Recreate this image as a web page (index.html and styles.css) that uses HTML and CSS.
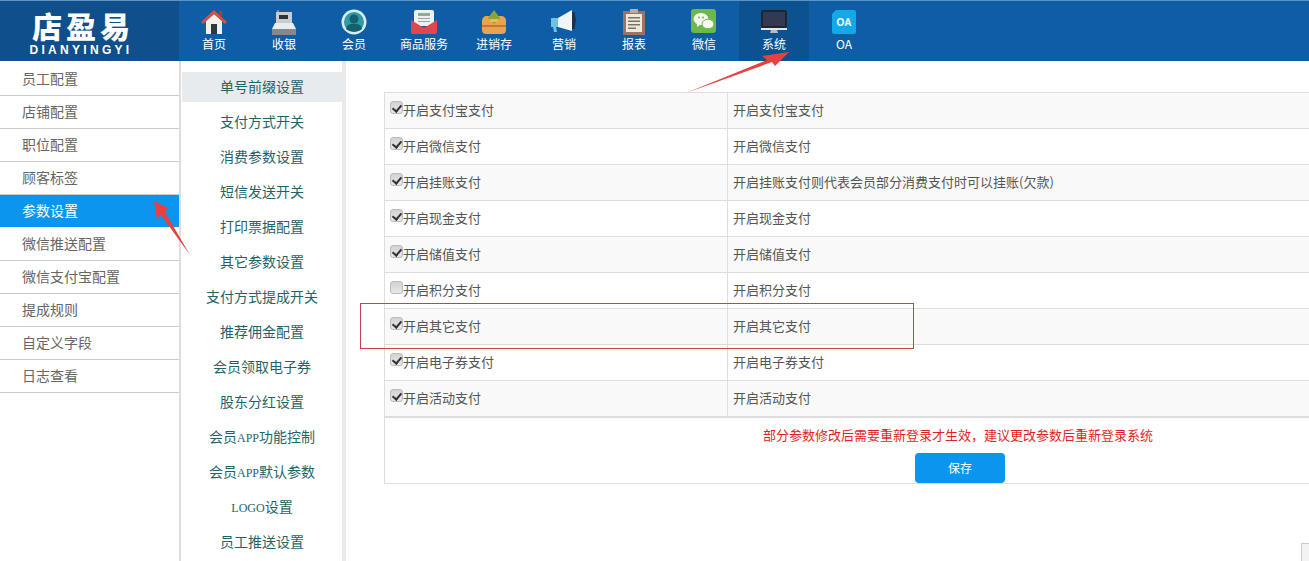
FILE: index.html
```html
<!DOCTYPE html>
<html lang="zh-CN">
  <head>
    <meta charset="UTF-8" />
    <title>店盈易 参数设置</title>
    <link rel="stylesheet" href="styles.css">
  </head>
  <body>
    <header class="topbar">
      <div class="logo">
        <div class="logo-name">店盈易</div>
        <div class="logo-sub">DIANYINGYI</div>
      </div>
      <nav class="nav">
        <a class="nav-item">
          <svg width="28" height="26" viewBox="0 0 28 26">
            <path fill="#f4f1ea" d="M6 12 14 5l8 7v13H6z" />
            <path fill="#2b3a3f" d="M11 15h6v10h-6z" />
            <path fill="#d9503f" d="M1 13 14 1l13 12-2 2L14 5 3 15z" />
            <path fill="#b53a2e" d="M19 2h3v6l-3-3z" />
          </svg>
          首页
        </a>
        <a class="nav-item">
          <svg width="28" height="26" viewBox="0 0 28 26">
            <path fill="#8d9294" d="M7 1h2v3H7z" />
            <path fill="#c9cdcf" d="M6 3h16v11H6z" />
            <path fill="#2c3438" d="M9 6h9v4H9z" />
            <path fill="#e9ecec" d="M5 14h18l3 6H2z" />
            <path fill="#85898b" d="M2 20h24v6H2z" />
          </svg>
          收银
        </a>
        <a class="nav-item">
          <svg width="28" height="26" viewBox="0 0 28 26">
            <circle cx="14" cy="13" r="12.5" fill="#d8eef0" />
            <circle cx="14" cy="13" r="10" fill="#2f9aa6" />
            <circle cx="14" cy="10" r="4.5" fill="#14606e" />
            <path fill="#14606e" d="M6 20c1-5 4-5 8-5s7 0 8 5c-4 3.500-12 3.500-16 0z" />
          </svg>
          会员
        </a>
        <a class="nav-item">
          <svg width="28" height="26" viewBox="0 0 28 26">
            <path fill="#eef0ee" d="M6 1h16a2 2 0 0 1 2 2v14H4V3a2 2 0 0 1 2-2z" />
            <path fill="#9aa3a6" d="M8 4h12v3H8zM8 9h12v1H8zM8 12h12v1H8z" />
            <path fill="#e0474f" d="M1 11l13 8 13-8v12a2 2 0 0 1-2 2H3a2 2 0 0 1-2-2z" />
          </svg>
          商品服务
        </a>
        <a class="nav-item">
          <svg width="28" height="26" viewBox="0 0 28 26">
            <path fill="#e9a24f" d="M2 12c0-3 2-5 5-5h14c3 0 5 2 5 5v9c0 3-2 4-4 4H6c-2 0-4-1-4-4z" />
            <path fill="#8aa33c" d="M8 9l6-8 6 8-6 6z" />
            <path fill="#c9772e" d="M2 16h24v2H2z" />
            <path fill="#e2c14e" d="M10 10h8v3h-8z" />
          </svg>
          进销存
        </a>
        <a class="nav-item">
          <svg width="28" height="26" viewBox="0 0 28 26">
            <path fill="#6fc1e4" d="M1 9h7v9H6l1 5H4l-1-5H1z" />
            <path fill="#f2f5f6" d="M8 9l14-8v21L8 18z" />
            <path fill="#20304a" d="M22 3h2.500l1.500 8-1.500 9H22z" />
          </svg>
          营销
        </a>
        <a class="nav-item">
          <svg width="28" height="26" viewBox="0 0 28 26">
            <path fill="#9a7564" d="M3 2h22v24H3z" />
            <path fill="#efe9dc" d="M6 5h16v18H6z" />
            <path fill="#c9a98a" d="M10 0h8v4h-8z" />
            <path fill="#7b7368" d="M8 8h12v1.500H8zM8 11.500h12V13H8zM8 15h12v1.500H8zM8 18.500h8V20H8z" />
          </svg>
          报表
        </a>
        <a class="nav-item">
          <svg width="28" height="26" viewBox="0 0 28 26">
            <rect x="1" y="0" width="25" height="24" rx="3" fill="#6cb94a" />
            <ellipse cx="11" cy="10" rx="7.500" ry="6" fill="#f4f8f1" />
            <path fill="#f4f8f1" d="M7 14v4l4-3z" />
            <ellipse cx="18" cy="15" rx="6" ry="4.800" fill="#f4f8f1" stroke="#6cb94a" />
            <circle cx="9" cy="8.500" r="1" fill="#6cb94a" />
            <circle cx="13" cy="8.500" r="1" fill="#6cb94a" />
          </svg>
          微信
        </a>
        <a class="nav-item nav-item-on">
          <svg width="28" height="26" viewBox="0 0 28 26">
            <rect x="1" y="1" width="26" height="18" rx="2" fill="#1d2433" />
            <path fill="#333a4f" d="M3 3h22v14H3z" />
            <path fill="#e4e7ea" d="M1 19h26v2H1z" />
            <path fill="#b7bcc2" d="M11 21h6l1 3h-8z" />
          </svg>
          系统
        </a>
        <a class="nav-item">
          <svg width="28" height="26" viewBox="0 0 28 26">
            <path fill="#12a9e8" d="M6 1h18a2 2 0 0 1 2 2v20a2 2 0 0 1-2 2H4a2 2 0 0 1-2-2V5z" />
            <text x="14" y="17" font-size="10" font-weight="700" fill="#fff" text-anchor="middle" font-family="Liberation Sans, sans-serif">OA</text>
          </svg>
          OA
        </a>
      </nav>
    </header>

    <div class="layout">
      <ul class="side">
        <li>员工配置</li>
        <li>店铺配置</li>
        <li>职位配置</li>
        <li>顾客标签</li>
        <li class="side-on">参数设置</li>
        <li>微信推送配置</li>
        <li>微信支付宝配置</li>
        <li>提成规则</li>
        <li>自定义字段</li>
        <li>日志查看</li>
      </ul>

      <ul class="sub">
        <li class="sub-on">单号前缀设置</li>
        <li>支付方式开关</li>
        <li>消费参数设置</li>
        <li>短信发送开关</li>
        <li>打印票据配置</li>
        <li>其它参数设置</li>
        <li>支付方式提成开关</li>
        <li>推荐佣金配置</li>
        <li>会员领取电子券</li>
        <li>股东分红设置</li>
        <li>会员<span class="latin">APP</span>功能控制</li>
        <li>会员<span class="latin">APP</span>默认参数</li>
        <li><span class="latin">LOGO</span>设置</li>
        <li>员工推送设置</li>
      </ul>

      <main class="main">
        <table class="params">
          <tr>
            <td><label><input type="checkbox" checked />开启支付宝支付</label></td>
            <td>开启支付宝支付</td>
          </tr>
          <tr>
            <td><label><input type="checkbox" checked />开启微信支付</label></td>
            <td>开启微信支付</td>
          </tr>
          <tr>
            <td><label><input type="checkbox" checked />开启挂账支付</label></td>
            <td>开启挂账支付则代表会员部分消费支付时可以挂账(欠款)</td>
          </tr>
          <tr>
            <td><label><input type="checkbox" checked />开启现金支付</label></td>
            <td>开启现金支付</td>
          </tr>
          <tr>
            <td><label><input type="checkbox" checked />开启储值支付</label></td>
            <td>开启储值支付</td>
          </tr>
          <tr>
            <td><label><input type="checkbox" />开启积分支付</label></td>
            <td>开启积分支付</td>
          </tr>
          <tr>
            <td><label><input type="checkbox" checked />开启其它支付</label></td>
            <td>开启其它支付</td>
          </tr>
          <tr>
            <td><label><input type="checkbox" checked />开启电子券支付</label></td>
            <td>开启电子券支付</td>
          </tr>
          <tr>
            <td><label><input type="checkbox" checked />开启活动支付</label></td>
            <td>开启活动支付</td>
          </tr>
        </table>
        <div class="save-box">
          <p class="notice">部分参数修改后需要重新登录才生效，建议更改参数后重新登录系统</p>
          <button class="save">保存</button>
        </div>
      </main>
    </div>

    <!-- marks drawn over the screenshot -->
    <svg class="marks" width="1309" height="561" viewBox="0 0 1309 561">
      <path fill="#e8403f" d="M686 93 767 60 762 56 789 52 775 66 772 62z" />
      <path fill="#e8403f" d="M154 201 168 208 165 212 190 255 161 215 157 219z" />
      <rect x="360.500" y="303.500" width="553" height="45" fill="none" stroke="#c9404a" />
    </svg>
    <div class="corner"></div>
  </body>
</html>
```

FILE: styles.css
```css
* {
  box-sizing: border-box;
}

html,
body {
  height: 561px;
  margin: 0;
  overflow: hidden;
}

body {
  position: relative;
  font-family: "Noto Sans CJK SC", "Liberation Sans", sans-serif;
  font-size: 13px;
  color: #555;
  background: #fff;
}

ul {
  list-style: none;
  margin: 0;
  padding: 0;
}

.topbar {
  display: flex;
  height: 61px;
  background: #0f5ea5;
  border-top: 1px solid #5b93c4;
}

.logo {
  width: 179px;
  padding: 9px 17px 0 0;
  background: #0f4f8a;
  color: #fff;
  text-align: center;
}

.logo-name {
  font-size: 30px;
  font-weight: 900;
  line-height: 30px;
  letter-spacing: 4px;
  padding-left: 4px;
}

.logo-sub {
  margin-top: 4px;
  font-family: "Liberation Sans", sans-serif;
  font-size: 12px;
  font-weight: 700;
  line-height: 12px;
  letter-spacing: 3.300px;
  white-space: nowrap;
}

.nav {
  display: flex;
}

.nav-item {
  display: flex;
  flex-direction: column;
  align-items: center;
  width: 70px;
  padding-top: 8px;
  font-size: 12px;
  line-height: 17px;
  color: #fff;
}

.nav-item svg {
  display: block;
}

.nav-item-on {
  background: #0c5290;
}

.layout {
  display: flex;
  height: 500px;
}

.side {
  width: 181px;
  flex: none;
  padding-top: 2px;
  border-right: 2px solid #ddd;
  font-size: 14px;
  color: #666;
}

.side li {
  height: 33px;
  line-height: 31px;
  padding-left: 22px;
  border-bottom: 1px solid #ccc;
}

.side .side-on {
  height: 32px;
  margin-bottom: 1px;
  background: #0a96ee;
  color: #fff;
  border-bottom: 0;
}

.sub {
  width: 165px;
  flex: none;
  padding: 11px 0 0 1px;
  border-right: 4px solid #e7e9ea;
  font-size: 14px;
  color: #1f6468;
  text-align: center;
}

.sub li {
  height: 35px;
  line-height: 28px;
  white-space: nowrap;
}

.sub .sub-on {
  height: 30px;
  margin-bottom: 5px;
  background: #e8ebed;
}

.latin {
  font-family: "Liberation Serif", serif;
  font-size: 12px;
}

.main {
  flex: 1;
  padding: 31px 0 0 38px;
  margin-right: -2px;
}

.params {
  width: 100%;
  table-layout: fixed;
  border-collapse: collapse;
  color: #555;
}

.params td {
  height: 36px;
  padding: 0 5px 2px;
  border: 1px solid #ddd;
}

.params td:first-child {
  width: 343px;
}

.params tr:nth-child(odd) {
  background: #f9f9f9;
}

.params tr:last-child td {
  border-bottom-width: 2px;
}

.params label {
  display: flex;
  align-items: center;
}

.params input {
  appearance: none;
  position: relative;
  flex: none;
  width: 13px;
  height: 13px;
  margin: -4px 0 0 0;
  border: 1px solid #bbb;
  border-radius: 3px;
  background: linear-gradient(#d2d2d2, #e8e8e8);
}

.params input:checked::after {
  content: "";
  position: absolute;
  left: 3px;
  top: 1px;
  width: 4px;
  height: 7px;
  border: solid #333;
  border-width: 0 2px 2px 0;
  transform: rotate(40deg);
}

.save-box {
  height: 66px;
  padding-top: 7px;
  border: 1px solid #ddd;
  border-top: 0;
}

.notice {
  margin: 0 0 8px;
  padding-left: 378px;
  line-height: 20px;
  color: #e01f26;
}

.save {
  display: block;
  width: 90px;
  height: 30px;
  margin-left: 530px;
  padding: 0;
  border: 0;
  border-radius: 4px;
  background: #0a96ee;
  color: #fff;
  font: inherit;
  font-size: 12px;
}

.marks {
  position: absolute;
  left: 0;
  top: 0;
  pointer-events: none;
}

.corner {
  position: absolute;
  right: 0;
  bottom: 0;
  width: 8px;
  height: 18px;
  background: #f3f3f3;
  border: 1px solid #ccc;
  border-right: 0;
  border-bottom: 0;
}
```
